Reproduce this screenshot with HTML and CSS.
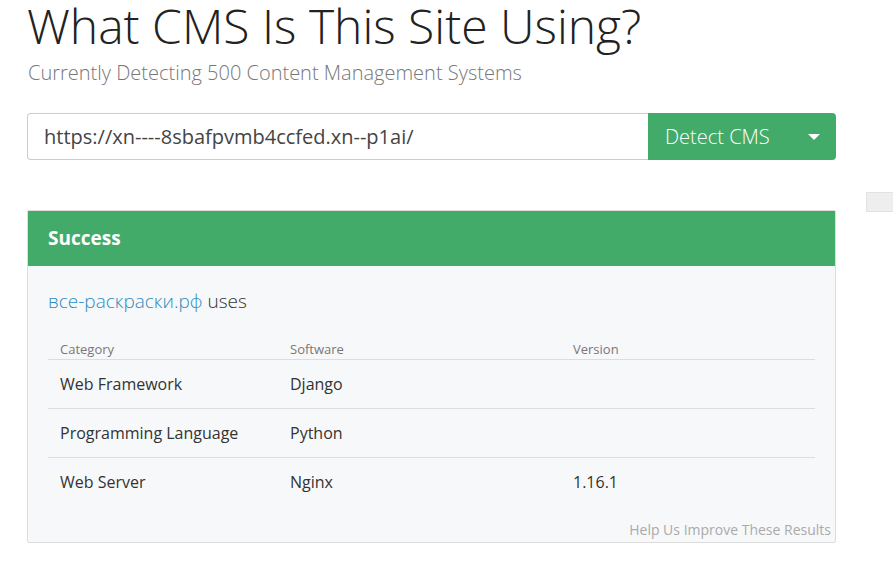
FILE: index.html
```html
<!DOCTYPE html>
<html lang="en">
<head>
    <meta charset="UTF-8">
    <meta name="viewport" content="width=device-width, initial-scale=1.0">
    <title>What CMS Is This Site Using?</title>
    <link rel="stylesheet" href="styles.css">
</head>
<body>

    <div class="page">
        <h1 class="title">What CMS Is This Site Using?</h1>
        <p class="subtitle">Currently Detecting 500 Content Management Systems</p>

        <!-- Поиск -->
        <form class="detect-form">
            <input class="detect-input" type="text" value="https://xn----8sbafpvmb4ccfed.xn--p1ai/">
            <button class="detect-btn" type="button">
                <span>Detect CMS</span>
                <span class="caret"></span>
            </button>
        </form>

        <!-- Результат -->
        <div class="panel">
            <div class="panel-heading">Success</div>
            <div class="panel-body">
                <p class="site-line"><a href="#" class="site-link">все-раскраски.рф</a> uses</p>
                <table class="results">
                    <thead>
                        <tr>
                            <th class="col-cat">Category</th>
                            <th class="col-soft">Software</th>
                            <th>Version</th>
                        </tr>
                    </thead>
                    <tbody>
                        <tr>
                            <td>Web Framework</td>
                            <td>Django</td>
                            <td></td>
                        </tr>
                        <tr>
                            <td>Programming Language</td>
                            <td>Python</td>
                            <td></td>
                        </tr>
                        <tr>
                            <td>Web Server</td>
                            <td>Nginx</td>
                            <td>1.16.1</td>
                        </tr>
                    </tbody>
                </table>
                <div class="improve"><a href="#">Help Us Improve These Results</a></div>
            </div>
        </div>
    </div>

    <div class="side-tab"></div>

</body>
</html>
```

FILE: styles.css
```css
body {
    margin: 0;
    background-color: #fff;
    color: #333;
    font-family: "Open Sans", Arial, sans-serif;
}

.page {
    width: 809px;
    padding-left: 27px;
}

.title {
    margin: 0;
    font-size: 48px;
    font-weight: 300;
    line-height: 52px;
    color: #222;
}

.subtitle {
    margin: 8px 0 0 1px;
    font-size: 20px;
    font-weight: 300;
    color: #777;
    line-height: 26px;
}

.detect-form {
    display: flex;
    margin-top: 27px;
    height: 47px;
}

.detect-input {
    flex: 1;
    box-sizing: border-box;
    height: 47px;
    margin: 0;
    padding: 0 16px;
    border: 1px solid #ccc;
    border-right: none;
    border-radius: 4px 0 0 4px;
    font-family: inherit;
    font-size: 20px;
    color: #444;
    background: #fff;
}

.detect-btn {
    display: flex;
    align-items: center;
    justify-content: space-between;
    width: 188px;
    height: 47px;
    padding: 0 16px 0 17px;
    border: none;
    border-radius: 0 4px 4px 0;
    background-color: #43ab6a;
    color: #fff;
    font-family: inherit;
    font-size: 20px;
    font-weight: 300;
    cursor: pointer;
}

.caret {
    width: 0;
    height: 0;
    border-left: 6px solid transparent;
    border-right: 6px solid transparent;
    border-top: 6px solid #fff;
}

.panel {
    margin-top: 50px;
    border: 1px solid #ddd;
    border-radius: 2px;
    background-color: #f7f8fa;
}

.panel-heading {
    height: 55px;
    padding-left: 20px;
    background-color: #43ab6a;
    color: #fff;
    font-size: 19px;
    font-weight: 700;
    line-height: 54px;
}

.panel-body {
    padding: 20px 4px 2px 20px;
}

.site-line {
    margin: 0;
    font-size: 19px;
    font-weight: 300;
    line-height: 30px;
    color: #333;
}

.site-link {
    color: #2f8cc0;
    text-decoration: none;
}

.results {
    width: 767px;
    margin-top: 24px;
    border-collapse: collapse;
}

.results th {
    padding: 0 12px 1px;
    text-align: left;
    font-size: 13px;
    font-weight: 400;
    color: #777;
    line-height: 18px;
    border-bottom: 1px solid #ddd;
}

.results td {
    height: 48px;
    padding: 0 12px;
    font-size: 16px;
    color: #333;
    border-bottom: 1px solid #ddd;
}

.results tbody tr:last-child td {
    border-bottom: none;
}

.col-cat {
    width: 206px;
}

.col-soft {
    width: 259px;
}

.improve {
    margin-top: 14px;
    text-align: right;
    font-size: 14px;
    line-height: 20px;
}

.improve a {
    color: #aaa;
    text-decoration: none;
}

.side-tab {
    position: absolute;
    top: 192px;
    left: 866px;
    width: 27px;
    height: 18px;
    background-color: #eee;
    border: 1px solid #e2e2e2;
    border-right: none;
}
```
